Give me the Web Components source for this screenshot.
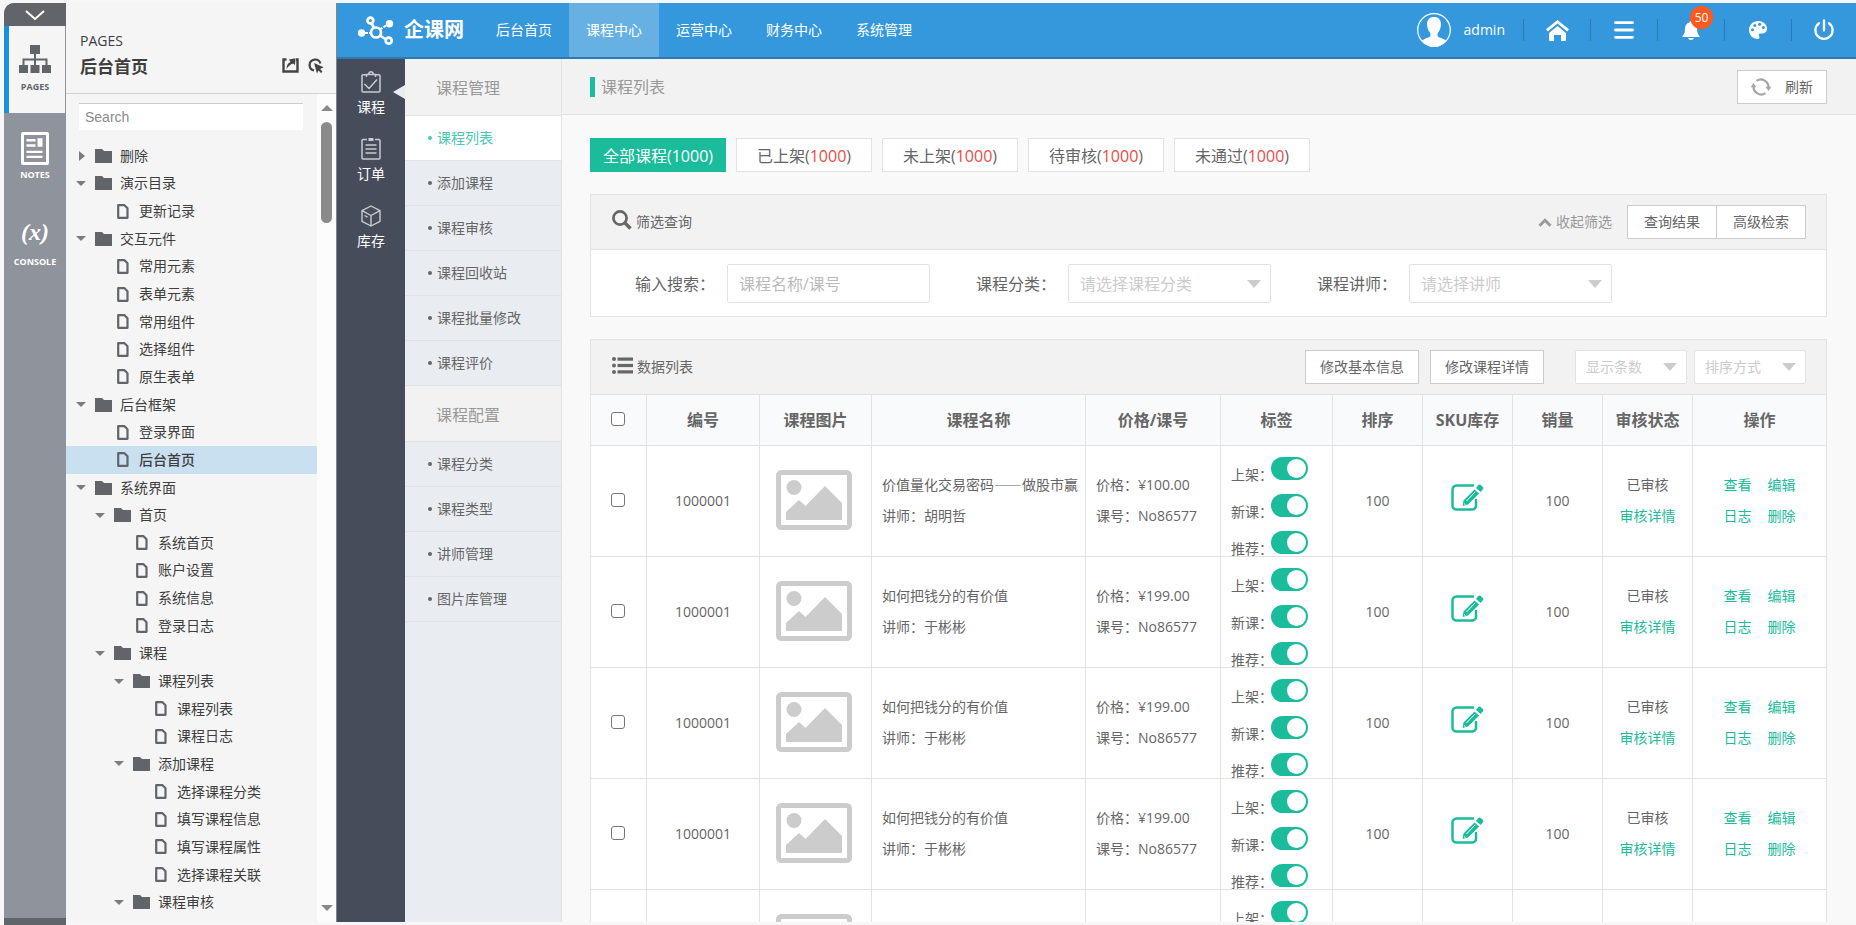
<!DOCTYPE html>
<html lang="zh-CN">
<head>
<meta charset="utf-8">
<title>企课网 - 课程列表</title>
<style>
  html, body { margin: 0; height: 100%; }
  body {
    font: 14px/20px "Open Sans", "Noto Sans CJK SC", sans-serif;
    color: #666;
    background: #f7f7f7;
    overflow: hidden;
    --green: #1abc9c;
    --line: #e2e2e2;
  }
</style>
</head>
<body>
<app-shell>
  <tool-rail slot="tools"></tool-rail>
  <page-tree slot="tree"></page-tree>
  <top-bar slot="top"></top-bar>
  <module-rail slot="modules"></module-rail>
  <sub-menu slot="menu"></sub-menu>
  <course-page slot="page"></course-page>
</app-shell>

<script>
const ICONS = {
  sitemap: ['0 0 32 28', '<g fill="currentColor"><rect x="11" width="10" height="9"/><rect y="20" width="9" height="8"/><rect x="11.5" y="20" width="9" height="8"/><rect x="23" y="20" width="9" height="8"/></g><path d="M16 8v12M4.5 21v-6.500h23V21" fill="none" stroke="currentColor" stroke-width="2"/>'],
  notes: ['0 0 28 33', '<rect width="28" height="33" rx="2" fill="#fff"/><rect x="3" y="3" width="22" height="27" fill="#8f939b"/><path d="M5.500 7h9v2.400h-9zM5.500 12.300h9v2.400h-9zM16.500 6.300h5v8.500h-5zM5.500 18.700h16v2.400h-16zM5.500 23.700h16v2.400h-16z" fill="#fff"/>'],
  down: ['0 0 20 10', '<path d="M1 1l9 8 9-8" fill="none" stroke="#fff" stroke-width="2"/>'],
  share: ['0 0 17 15', '<path d="M4.500 1.500h-3v12h14v-12h-1.500" fill="none" stroke="currentColor" stroke-width="2.400"/><path d="M4.500 11c0-4 1.500-6 4-7L7 1.500 13.500.3 13 7l-2-1.500C8.500 6.500 6.500 8 4.500 11z" fill="currentColor"/>'],
  pick: ['0 0 16 16', '<path d="M12.400 5.500A5.500 5.500 0 1 0 6 12.400" fill="none" stroke="currentColor" stroke-width="2.200"/><path d="M6 5l9.700 4.300-3.500 1.600 2.300 2.800-1.500 1.400-2.500-2.700L9 15.500z" fill="currentColor"/>'],
  folder: ['0 0 17 14', '<path d="M0 0h7l2 2h8v12H0z" fill="currentColor"/>'],
  file: ['0 0 12 15', '<path d="M1.200 1.200h6.300l3 3v9.600H1.200z" fill="none" stroke="currentColor" stroke-width="2.200" stroke-linejoin="round"/>'],
  logo: ['0 0 36 29', '<g fill="none" stroke="#fff" stroke-width="2.700"><circle cx="12.400" cy="4.500" r="2.900"/><circle cx="18" cy="16.500" r="5"/><circle cx="30.700" cy="24.700" r="3"/><path d="M13.700 7.300l2.200 4.500M22 19.500l6 4"/></g><g fill="#fff"><circle cx="31.500" cy="7.700" r="3.700"/><circle cx="3.600" cy="17" r="3.700"/></g><path d="M21.800 13.300l7-4M7 17h6" stroke="#fff" stroke-width="2" stroke-dasharray="3 1.200"/>'],
  avatar: ['0 0 34 34', '<circle cx="17" cy="17" r="16.300" fill="none" stroke="#fff" stroke-width="1.200"/><path d="M17 4c4.500 0 7 2.600 6.900 7.500-.1 4.200-1.400 6.300-3 8.200-.7 1-.5 3.600.5 4.300 2.300 1.400 5.800 1.600 7.600 3.800A16.500 16.500 0 0 1 17 34 16.500 16.500 0 0 1 5 27.800c1.800-2.200 5.300-2.400 7.600-3.800 1-.7 1.200-3.300.5-4.300-1.600-1.900-2.900-4-3-8.200C10 6.600 12.500 4 17 4z" fill="#fff"/>'],
  home: ['0 0 23 21', '<path d="M.9 10.300L11.500 1.700l10.600 8.600" fill="none" stroke="#fff" stroke-width="2.800"/><path d="M3 12.900l8.500-7 8.500 7V20a1 1 0 0 1-1 1h-4v-6H8v6H4a1 1 0 0 1-1-1z" fill="#fff"/>'],
  menu: ['0 0 20 18', '<path d="M1.500 1.700h17M1.500 9h17M1.500 16.300h17" stroke="#fff" stroke-width="2.800" stroke-linecap="round"/>'],
  bell: ['0 0 18 19', '<path d="M9 0c1 0 1.500.6 1.500 1.400C13.500 2 15 4.500 15 7.500c0 4 .8 5.800 3 8.500H0c2.200-2.700 3-4.500 3-8.500 0-3 1.500-5.500 4.500-6.100C7.500.6 8 0 9 0zM6.200 17h5.600C11.500 18.300 10.400 19 9 19s-2.500-.7-2.800-2z" fill="#fff"/>'],
  palette: ['0 0 18 18', '<path d="M9 0c5 0 9 3.400 9 7.600 0 3.200-2.200 5-5 5h-1.800c-1.300 0-1.900 1.100-1.200 2.100.9 1.300.6 3.300-1.400 3.300C3.800 18 0 14 0 9s4-9 9-9z" fill="#fff"/><g fill="#3598dc"><circle cx="3.500" cy="8.700" r="1.500"/><circle cx="5.800" cy="4.400" r="1.500"/><circle cx="10.600" cy="3.300" r="1.500"/><circle cx="14.400" cy="6.600" r="1.500"/></g>'],
  power: ['0 0 20 20', '<path d="M5 3.300a8.600 8.600 0 1 0 10 0M10 .5v10" fill="none" stroke="#fff" stroke-width="2.300" stroke-linecap="round"/>'],
  bag: ['0 0 20 22', '<g fill="none" stroke="#c9cbd0" stroke-width="1.500"><path d="M5 3.800H2a1 1 0 0 0-1 1V20a1 1 0 0 0 1 1h16a1 1 0 0 0 1-1V4.800a1 1 0 0 0-1-1h-3M5.500 6V3.500h2C8 1.500 9 .8 10 .8s2 .7 2.500 2.700h2V6M8 3.500h4M3.500 13l4.500 4.500 8-9"/></g>'],
  order: ['0 0 20 22', '<g fill="none" stroke="#c9cbd0" stroke-width="1.500"><path d="M6 1.500H2a1 1 0 0 0-1 1V20a1 1 0 0 0 1 1h16a1 1 0 0 0 1-1V2.500a1 1 0 0 0-1-1h-4M4.500 7h11M4.500 11h11M4.500 15h11"/><path d="M7.500 1.500h5" stroke-width="3"/></g>'],
  stock: ['0 0 20 22', '<path d="M10 1l9 4.700v10.600L10 21l-9-4.700V5.700zM1 5.700l9 4.800 9-4.800M10 10.500V21M3.500 10.500l3 1.600" fill="none" stroke="#c9cbd0" stroke-width="1.400" stroke-linejoin="round"/>'],
  refresh: ['0 0 20 20', '<path d="M5.500 3.800A7.700 7.700 0 0 1 17.400 11M14.500 16.200A7.700 7.700 0 0 1 2.600 9" fill="none" stroke="#a6a6a6" stroke-width="2.200"/><path d="M-.3 10.200L2.400 6l3.200 4.200zM14.400 9.800l3.200 4.200 2.700-4.200z" fill="#a6a6a6"/>'],
  search: ['0 0 20 20', '<circle cx="8" cy="8" r="6.600" fill="none" stroke="#666" stroke-width="2.700"/><path d="M12.500 12.500l6 6" stroke="#666" stroke-width="3.400"/>'],
  list: ['0 0 21 17', '<g fill="#666"><circle cx="2" cy="2" r="2"/><circle cx="2" cy="8.500" r="2"/><circle cx="2" cy="15" r="2"/><rect x="5.500" y=".5" width="15.500" height="3.200"/><rect x="5.500" y="6.900" width="15.500" height="3.200"/><rect x="5.500" y="13.300" width="15.500" height="3.200"/></g>'],
  up: ['0 0 14 9', '<path d="M1.500 7.800L7 2.300l5.500 5.500" fill="none" stroke="#999" stroke-width="3"/>'],
  picture: ['0 0 76 60', '<rect x="2.500" y="2.500" width="71" height="55" rx="3" fill="none" stroke="#ccc" stroke-width="5"/><circle cx="18" cy="17.500" r="7.500" fill="#ccc"/><path d="M10 50v-8l13-12 6.500 6L49 16l17 17v17z" fill="#ccc"/>'],
  edit: ['0 0 33 27', '<path d="M22 1.500H5.500a4 4 0 0 0-4 4v16a4 4 0 0 0 4 4H21a4 4 0 0 0 4-4V16" fill="none" stroke="#1abc9c" stroke-width="2.500" stroke-linecap="round"/><path d="M23.500 5.500l4.700 4L17 20.500 11.700 22l.8-5.500zM25 4l2.300-3c.7-.8 1.700-.8 2.500 0l2 2c.8.800.8 1.600 0 2.400l-2.300 2.500z" fill="#1abc9c"/><path d="M15.500 17l8.700-9.200M13 19.500l1.700 1.600" stroke="#fff" stroke-width="1"/>']
};

function define(name, css, html) {
  const tpl = document.createElement('template');
  tpl.innerHTML = '<style>:host,*{box-sizing:border-box}' + css + '</style>' + (typeof html === 'string' ? html : '');
  customElements.define(name, class extends HTMLElement {
    connectedCallback() {
      if (this.shadowRoot) return;
      const root = this.attachShadow({ mode: 'open' });
      root.append(tpl.content.cloneNode(true));
      if (typeof html === 'function') root.innerHTML += html(this);
    }
  });
}

define('ui-icon', ':host{display:inline-block;flex:none}svg{display:block;width:100%;height:100%;overflow:visible}', el => {
  const [box, body] = ICONS[el.getAttribute('name')];
  const [, , w, h] = box.split(' ');
  return `<style>:host{width:${w}px;height:${h}px}</style><svg viewBox="${box}" aria-hidden="true">${body}</svg>`;
});

define('app-shell', `
  :host{display:grid;grid-template:minmax(0,1fr)/62px 270px minmax(0,1fr);height:100vh;padding:3px 0 0 4px;overflow:hidden}
  .app{display:grid;grid-template:56px minmax(0,1fr)/68px 157px minmax(0,1fr);border-left:1px solid #7f868c;margin-bottom:3px;min-height:0}
  .top{grid-column:1/-1;min-width:0}
  .cell{display:grid;grid-template-rows:minmax(0,1fr);min-height:0;min-width:0}`, `
  <slot name="tools"></slot><slot name="tree"></slot>
  <div class="app"><div class="top"><slot name="top"></slot></div>
    <div class="cell"><slot name="modules"></slot></div>
    <div class="cell"><slot name="menu"></slot></div>
    <div class="cell"><slot name="page"></slot></div>
  </div>`);

define('tool-rail', `
  :host{display:flex;flex-direction:column;background:#8f939b;border-bottom:7px solid #616569;border-top-left-radius:10px;overflow:hidden}
  button{border:0;padding:0;margin:0;background:none;color:#fff;font:bold 9px/12px "Open Sans",sans-serif;display:flex;flex-direction:column;align-items:center}
  .fold{height:23px;flex:none;background:#616569;justify-content:center}
  .tool{height:87px;flex:none;padding-top:19px;gap:4px}
  .on{background:#f5f5f5;color:#616569;border-left:5px solid #1890e0;border-right:1px solid #8f939b;padding-right:4px;gap:8px}
  .x{font:italic bold 24px/32px "Liberation Serif",serif;margin-top:-3px}
  .x+span{margin-top:4px}`, `
  <button class="fold" aria-label="Collapse"><ui-icon name="down"></ui-icon></button>
  <button class="tool on"><ui-icon name="sitemap"></ui-icon>PAGES</button>
  <button class="tool"><ui-icon name="notes"></ui-icon>NOTES</button>
  <button class="tool"><span class="x">(x)</span><span>CONSOLE</span></button>`);

const TREE = [
  [1, 'c', '删除'], [1, 'o', '演示目录'], [2, 'f', '更新记录'], [1, 'o', '交互元件'],
  [2, 'f', '常用元素'], [2, 'f', '表单元素'], [2, 'f', '常用组件'], [2, 'f', '选择组件'], [2, 'f', '原生表单'],
  [1, 'o', '后台框架'], [2, 'f', '登录界面'], [2, 'f', '后台首页', 1], [1, 'o', '系统界面'], [2, 'o', '首页'],
  [3, 'f', '系统首页'], [3, 'f', '账户设置'], [3, 'f', '系统信息'], [3, 'f', '登录日志'],
  [2, 'o', '课程'], [3, 'o', '课程列表'], [4, 'f', '课程列表'], [4, 'f', '课程日志'],
  [3, 'o', '添加课程'], [4, 'f', '选择课程分类'], [4, 'f', '填写课程信息'], [4, 'f', '填写课程属性'], [4, 'f', '选择课程关联'],
  [3, 'o', '课程审核']
];
define('page-tree', `
  :host{display:flex;flex-direction:column;min-height:0;margin-bottom:3px;background:#f5f5f5;color:#3e3e3e}
  header{height:91px;flex:none;border-bottom:1px solid #d2d2d2;padding:28px 12px 0 14px}
  .kind{line-height:20px}
  .row{display:flex;align-items:center;line-height:32px}
  h1{flex:1;margin:0;font-size:17px}
  .row button{border:0;background:none;padding:0;margin-left:9px;color:#444}
  .body{flex:1;display:flex;min-height:0}
  .pane{flex:1;display:flex;flex-direction:column;min-height:0;padding-bottom:6px}
  input{height:27px;flex:none;margin:9px 14px 12px 13px;border:0;border-top:1px solid #ccc;background:#fff;padding:0 6px;font:14px "Liberation Sans",sans-serif;outline:0}
  input::placeholder{color:#8b8b8b;opacity:1}
  ul{flex:1;min-height:0;display:grid;grid-auto-rows:minmax(0,1fr);margin:0;padding:0;list-style:none}
  li{display:flex;align-items:center;white-space:nowrap;padding-left:calc(var(--l)*19px - 9px)}
  li ui-icon{color:#616569}
  .f ui-icon{margin:0 10px 0 22px}
  .o ui-icon,.c ui-icon{margin-right:8px}
  .o::before,.c::before{content:"";border:5px solid transparent}
  .o::before{border-top-color:#7c7c7c;border-bottom-width:0;margin-right:9px}
  .c::before{border-left:6px solid #7c7c7c;border-right-width:0;margin:0 10px 0 3px}
  .sel{background:#c9e0f0;font-weight:500}
  .bar{width:19px;background:#fcfcfc;display:flex;flex-direction:column;align-items:center;padding:11px 0}
  .bar i{border:6px solid transparent}
  .up{border-top-width:0!important;border-bottom-color:#8a8a8a!important}
  .dn{border-bottom-width:0!important;border-top-color:#8a8a8a!important;margin-top:auto}
  .thumb{width:11px;height:101px;border-radius:6px;background:#8a8a8a;margin-top:11px}`, () => `
  <header><div class="kind">PAGES</div><div class="row"><h1>后台首页</h1>
    <button aria-label="Open in new window"><ui-icon name="share"></ui-icon></button><button aria-label="Select"><ui-icon name="pick"></ui-icon></button></div></header>
  <div class="body"><div class="pane"><input type="text" placeholder="Search" aria-label="Search">
    <ul>${TREE.map(([l, k, t, s]) => `<li class="${k}${s ? ' sel' : ''}" style="--l:${l}"><ui-icon name="${k === 'f' ? 'file' : 'folder'}"></ui-icon>${t}</li>`).join('')}</ul></div>
    <div class="bar"><i class="up"></i><div class="thumb"></div><i class="dn"></i></div></div>`);

define('top-bar', `
  :host{display:flex;height:56px;background:#3598dc;border-bottom:2px solid #2b7ab3;color:#fff;align-items:center}
  a{color:inherit;text-decoration:none}
  .brand{display:flex;align-items:center;gap:10px;width:142px;padding-left:21px;font-size:20px;font-weight:bold;white-space:nowrap}
  nav{display:flex;flex:1}
  nav a{width:90px;text-align:center;line-height:54px}
  nav .on{background:#67b0e4}
  .user{display:flex;align-items:center;gap:13px;margin-right:18px}
  .tool{width:67px;height:22px;border-left:1px solid #2b7ab3;display:flex;justify-content:center;align-items:center;position:relative}
  .tool:last-child{width:65px}
  .badge{position:absolute;left:32px;top:-13px;width:23px;height:23px;border-radius:50%;background:#ff5a1c;font-size:12px;line-height:23px;text-align:center}`, `
  <a class="brand" href="#"><ui-icon name="logo"></ui-icon>企课网</a>
  <nav><a href="#">后台首页</a><a class="on" href="#">课程中心</a><a href="#">运营中心</a><a href="#">财务中心</a><a href="#">系统管理</a></nav>
  <a class="user" href="#"><ui-icon name="avatar"></ui-icon>admin</a>
  <a class="tool" href="#" aria-label="首页"><ui-icon name="home"></ui-icon></a>
  <a class="tool" href="#" aria-label="菜单"><ui-icon name="menu"></ui-icon></a>
  <a class="tool" href="#" aria-label="消息"><ui-icon name="bell"></ui-icon><span class="badge">50</span></a>
  <a class="tool" href="#" aria-label="主题"><ui-icon name="palette"></ui-icon></a>
  <a class="tool" href="#" aria-label="退出"><ui-icon name="power"></ui-icon></a>`);

define('module-rail', `
  :host{display:block;background:#474c5b;padding-top:12px}
  a{display:flex;flex-direction:column;align-items:center;gap:4px;height:67px;color:#fff;text-decoration:none;position:relative}
  .on::after{content:"";position:absolute;right:0;top:14px;border:7px solid transparent;border-left-width:0;border-right:12px solid #e9edf2}`, `
  <a class="on" href="#"><ui-icon name="bag"></ui-icon>课程</a>
  <a href="#"><ui-icon name="order"></ui-icon>订单</a>
  <a href="#"><ui-icon name="stock"></ui-icon>库存</a>`);

define('sub-menu', `
  :host{display:block;background:#e9edf2;border-right:1px solid var(--line)}
  h2{margin:0;height:56px;line-height:58px;font-size:16px;font-weight:normal;color:#999;background:#f2f2f2;padding-left:31px;border-bottom:1px solid var(--line)}
  h2:first-of-type{height:57px}
  a{display:flex;align-items:center;gap:5px;height:45px;padding-left:23px;color:#666;text-decoration:none;border-bottom:1px solid #e0e2e5}
  a::before{content:"";width:4px;height:4px;border-radius:50%;background:currentColor}
  .on{background:#fff;color:#48c9b0}`, () => {
  const links = (list, on) => list.map((t, i) => `<a href="#"${i === on ? ' class="on"' : ''}>${t}</a>`).join('');
  return '<h2>课程管理</h2>' + links(['课程列表', '添加课程', '课程审核', '课程回收站', '课程批量修改', '课程评价'], 0) +
    '<h2>课程配置</h2>' + links(['课程分类', '课程类型', '讲师管理', '图片库管理'], -1);
});

define('plain-button', `
  :host{display:block}
  button{display:flex;align-items:center;justify-content:center;gap:14px;width:100%;height:34px;padding:0;border:1px solid #ccc;background:#fff;color:#666;font:inherit;white-space:nowrap}`,
  '<button><slot></slot></button>');

define('drop-down', `
  :host{display:block;position:relative}
  select{appearance:none;width:100%;height:100%;border:1px solid var(--line);border-radius:2px;background:#fff;color:#ccc;font:inherit;padding:0 10px;margin:0}
  :host::after{content:"";position:absolute;right:10px;top:50%;margin-top:-4px;border:7px solid transparent;border-top:8px solid #ccc;border-bottom:0;pointer-events:none}`,
  el => `<select aria-label="${el.getAttribute('placeholder')}"><option>${el.getAttribute('placeholder')}</option></select>`);

define('status-tabs', `
  :host{display:flex;gap:10px;margin:23px 0 22px}
  button{width:136px;height:34px;padding:1px 0 0;border:1px solid var(--line);background:#fff;color:#666;font:inherit;font-size:16px;white-space:nowrap}
  span{color:#ee4b45}
  .on{background:var(--green);border-color:var(--green);color:#fff}
  .on span{color:#fff}`,
  () => ['全部课程', '已上架', '未上架', '待审核', '未通过'].map((t, i) => `<button${i ? '' : ' class="on"'}>${t}(<span>1000</span>)</button>`).join(''));

define('panel-box', `
  :host{display:block;border:1px solid var(--line);background:#fff;margin-bottom:22px}
  header{display:flex;align-items:center;height:55px;background:#f2f2f2;border-bottom:1px solid var(--line);padding:0 20px 0 21px}
  h3{flex:1;display:flex;align-items:center;gap:4px;margin:0;font-size:14px;font-weight:normal}
  h3 ui-icon{margin-bottom:4px}`,
  el => `<header><h3><ui-icon name="${el.getAttribute('icon')}"></ui-icon>${el.getAttribute('heading')}</h3><slot name="actions"></slot></header><slot></slot>`);

define('filter-form', `
  :host{display:flex;gap:46px;padding:14px 0 13px 44px}
  .field{display:flex;align-items:center;font-size:16px}
  label{width:92px}
  input{width:203px;height:39px;border:1px solid var(--line);border-radius:2px;padding:0 11px;font:inherit;outline:0}
  input::placeholder{color:#bbb;opacity:1}
  select{appearance:none;width:203px;height:39px;border:1px solid var(--line);border-radius:2px;background:#fff;color:#ccc;font:inherit;padding:0 11px}
  .pick{position:relative}
  .pick::after{content:"";position:absolute;right:10px;top:16px;border:7px solid transparent;border-top:8px solid #ccc;border-bottom:0;pointer-events:none}`, `
  <div class="field"><label for="q">输入搜索：</label><input id="q" type="text" placeholder="课程名称/课号"></div>
  <div class="field"><label for="cat">课程分类：</label><span class="pick"><select id="cat"><option>请选择课程分类</option></select></span></div>
  <div class="field"><label for="who">课程讲师：</label><span class="pick"><select id="who"><option>请选择讲师</option></select></span></div>`);

const COURSES = [
  ['价值量化交易密码——做股市赢', '胡明哲', '100.00'],
  ['如何把钱分的有价值', '于彬彬', '199.00'],
  ['如何把钱分的有价值', '于彬彬', '199.00'],
  ['如何把钱分的有价值', '于彬彬', '199.00'],
  ['如何把钱分的有价值', '于彬彬', '199.00']
];
define('course-table', `
  :host{display:block}
  table{width:100%;table-layout:fixed;border-collapse:separate;border-spacing:0}
  th,td{border:solid var(--line);border-width:0 1px 1px 0;padding:0;text-align:center;white-space:nowrap}
  th:last-child,td:last-child{border-right:0}
  th{height:51px;background:#f9fafc;font-size:16px}
  td{height:111px;line-height:31px;padding-bottom:2px}
  .l{text-align:left;padding-left:10px}
  .name{font-family:"Noto Sans CJK SC",sans-serif}
  .pic{padding:0 3px 3px 0}
  .box{padding-right:2px}
  .check{appearance:none;width:14px;height:14px;border:1px solid #767676;border-radius:3px;background:#fff;margin:0;vertical-align:middle}
  th .check{margin-bottom:5px}
  td .check{margin-bottom:4px}
  ui-icon{vertical-align:middle}
  td a ui-icon{margin-bottom:6px}
  .sw{padding:0 0 0 10px;vertical-align:top}
  .sw div{height:110px;padding-top:11px}
  .sw label{display:flex;height:37px;line-height:16px}
  .sw span{width:40px;margin-top:10px}
  .sw input{appearance:none;flex:none;width:37px;height:23px;margin:0;border-radius:12px;background:var(--green);position:relative}
  .sw input::after{content:"";position:absolute;right:2px;top:2px;width:19px;height:19px;border-radius:50%;background:#fff}
  a{color:var(--green);text-decoration:none}
  .ops a+a{margin-left:16px}`, () => `
  <table><colgroup>${[56, 113, 112, 0, 135, 112, 90, 90, 90, 90, 133].map(w => w ? `<col style="width:${w}px">` : '<col>').join('')}</colgroup>
  <thead><tr><th class="box"><input class="check" type="checkbox" aria-label="全选"></th>${['编号', '课程图片', '课程名称', '价格/课号', '标签', '排序', 'SKU库存', '销量', '审核状态', '操作'].map(t => `<th>${t}</th>`).join('')}</tr></thead>
  <tbody>${COURSES.map(([name, who, price]) => `<tr>
    <td class="box"><input class="check" type="checkbox" aria-label="选择 ${name}"></td><td>1000001</td><td class="pic"><ui-icon name="picture"></ui-icon></td>
    <td class="l name">${name}<br>讲师：${who}</td><td class="l">价格：¥${price}<br>课号：No86577</td>
    <td class="sw"><div>${['上架', '新课', '推荐'].map(t => `<label><span>${t}：</span><input type="checkbox" role="switch" checked></label>`).join('')}</div></td>
    <td>100</td><td><a href="#" aria-label="编辑库存"><ui-icon name="edit"></ui-icon></a></td><td>100</td>
    <td>已审核<br><a href="#">审核详情</a></td>
    <td class="ops"><a href="#">查看</a><a href="#">编辑</a><br><a href="#">日志</a><a href="#">删除</a></td></tr>`).join('')}</tbody></table>`);

define('course-page', `
  :host{display:block;background:#f9f9f9;overflow:hidden;min-height:0}
  .title{display:flex;align-items:center;height:56px;background:#f2f2f2;border-bottom:1px solid var(--line);padding:0 29px 0 28px}
  h1{flex:1;margin:0;font-size:16px;line-height:20px;font-weight:normal;color:#999;border-left:5px solid var(--green);padding-left:6px}
  .title plain-button{width:90px}
  .main{padding:0 29px 0 28px}
  .acts{display:flex;align-items:center}
  .fold{display:flex;align-items:center;gap:4px;margin-right:15px;color:#999;text-decoration:none}
  .pair{display:flex}
  .pair plain-button{width:90px}
  .pair plain-button+plain-button{margin-left:-1px}
  .wide{width:114px;margin-right:11px}
  .wide+.wide{margin-right:31px}
  drop-down{width:112px;height:34px}
  drop-down+drop-down{margin-left:7px}`, `
  <div class="title"><h1>课程列表</h1><plain-button><ui-icon name="refresh"></ui-icon>刷新</plain-button></div>
  <div class="main"><status-tabs></status-tabs>
    <panel-box icon="search" heading="筛选查询">
      <div class="acts" slot="actions"><a class="fold" href="#"><ui-icon name="up"></ui-icon>收起筛选</a>
        <div class="pair"><plain-button>查询结果</plain-button><plain-button>高级检索</plain-button></div></div>
      <filter-form></filter-form>
    </panel-box>
    <panel-box icon="list" heading="数据列表">
      <div class="acts" slot="actions"><plain-button class="wide">修改基本信息</plain-button><plain-button class="wide">修改课程详情</plain-button>
        <drop-down placeholder="显示条数"></drop-down><drop-down placeholder="排序方式"></drop-down></div>
      <course-table></course-table>
    </panel-box>
  </div>`);
</script>
</body>
</html>
